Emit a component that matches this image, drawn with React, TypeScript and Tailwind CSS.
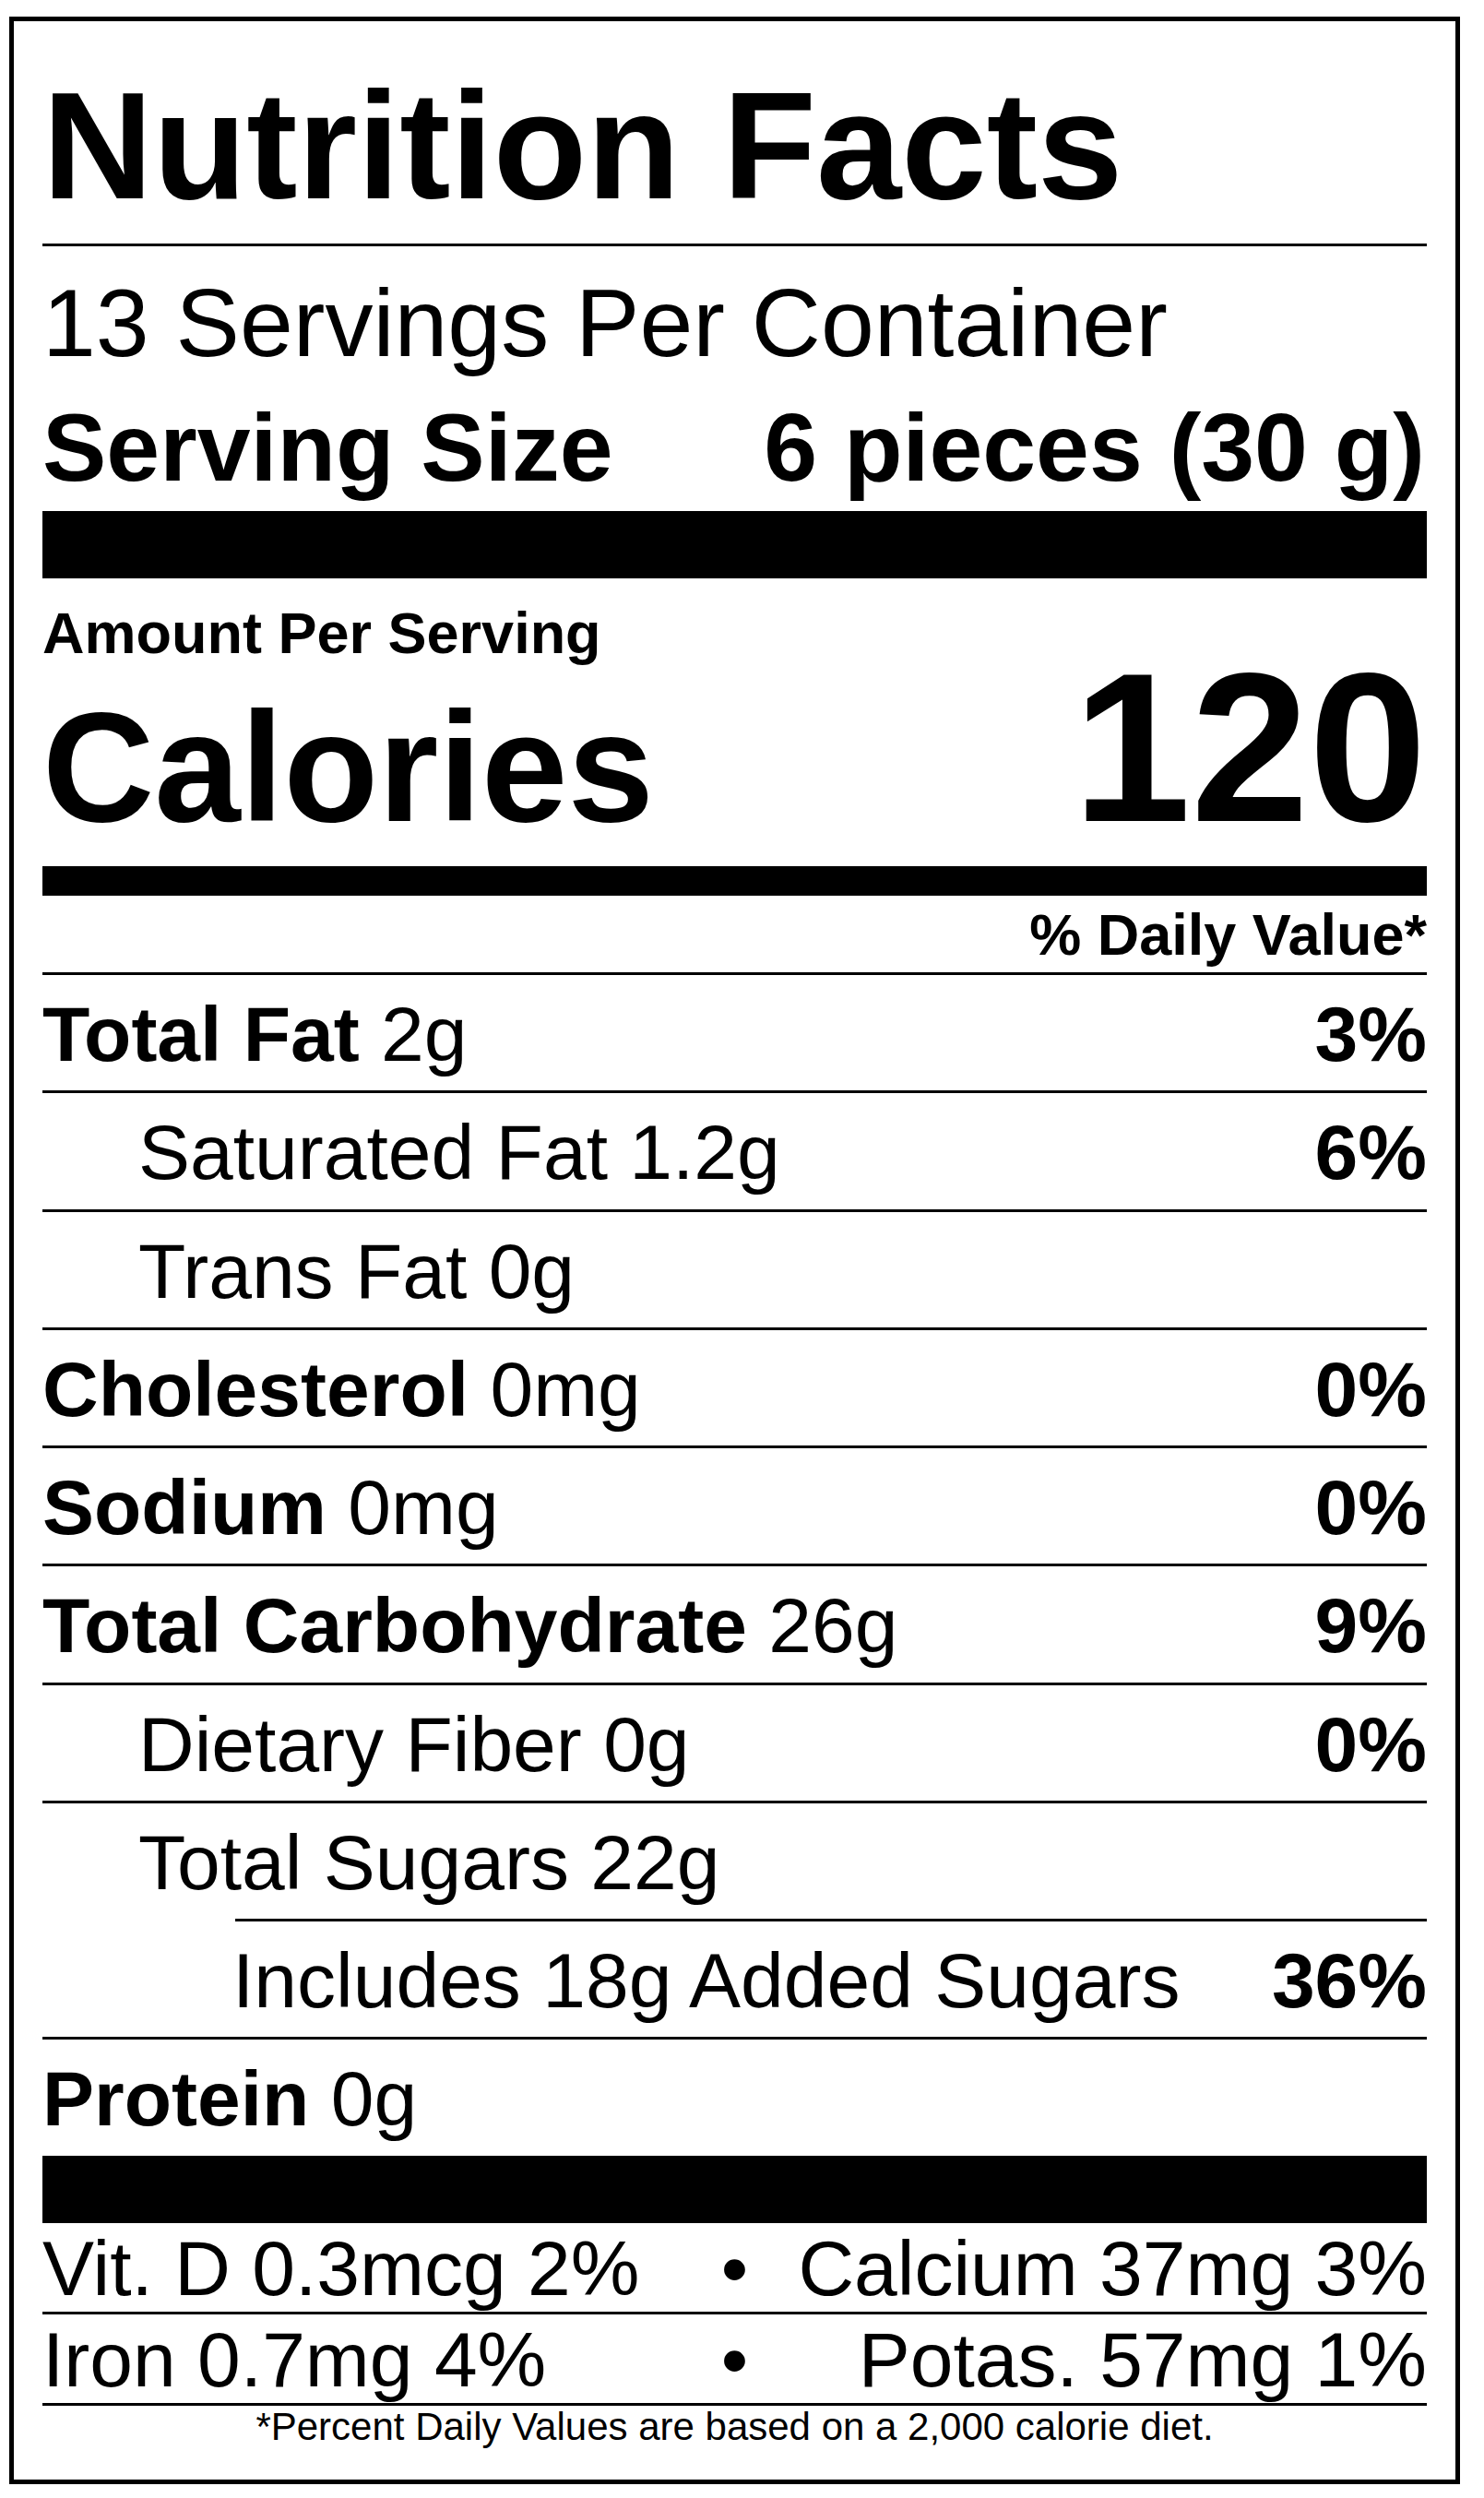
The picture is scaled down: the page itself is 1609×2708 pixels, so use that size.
const font = "font-['Liberation_Sans',Arial,Helvetica,sans-serif]";

type Nutrient = {
  label: string;
  amount?: string;
  dv?: string;
  bold?: boolean;
  level?: 0 | 1 | 2;
  shortRule?: boolean;
};

const nutrients: Nutrient[] = [
  { label: "Total Fat", amount: "2g", dv: "3%", bold: true },
  { label: "Saturated Fat", amount: "1.2g", dv: "6%", level: 1 },
  { label: "Trans Fat", amount: "0g", level: 1 },
  { label: "Cholesterol", amount: "0mg", dv: "0%", bold: true },
  { label: "Sodium", amount: "0mg", dv: "0%", bold: true },
  { label: "Total Carbohydrate", amount: "26g", dv: "9%", bold: true },
  { label: "Dietary Fiber", amount: "0g", dv: "0%", level: 1 },
  { label: "Total Sugars", amount: "22g", level: 1, shortRule: true },
  { label: "Includes 18g Added Sugars", dv: "36%", level: 2 },
];

function NutrientRow({ n }: { n: Nutrient }) {
  const pad = n.level === 2 ? "pl-[206px]" : n.level === 1 ? "pl-[104px]" : "";
  return (
    <>
      <div className={`flex h-[125.25px] items-start justify-between pt-[22px] text-[84px] leading-none ${pad}`}>
        <span>
          {n.bold ? <span className="font-bold">{n.label}</span> : n.label}
          {n.amount ? ` ${n.amount}` : ""}
        </span>
        {n.dv && <span className="font-bold">{n.dv}</span>}
      </div>
      <div className={`h-[3px] bg-black ${n.shortRule ? "ml-[209px]" : ""}`} />
    </>
  );
}

function VitaminRow({ left, right }: { left: string; right: string }) {
  return (
    <div className="grid h-[96px] grid-cols-[1fr_auto_1fr] items-start pt-[7px] text-[84px] leading-none">
      <span>{left}</span>
      <span className="px-[8px]">•</span>
      <span className="text-right">{right}</span>
    </div>
  );
}

export default function App() {
  return (
    <div className={`min-h-[2708px] w-[1609px] bg-white text-black ${font}`}>
      <div className="ml-[10px] pt-[18px]">
        <div className="flex h-[2675px] w-[1573px] flex-col border-[5px] border-black px-[31px] pt-[52px]">
          <h1 className="text-[166px] font-bold leading-none">Nutrition Facts</h1>
          <div className="mt-[23px] h-[3px] bg-black" />

          <p className="mt-[31px] text-[104px] leading-none">13 Servings Per Container</p>
          <div className="mt-[31px] flex items-baseline justify-between text-[104px] font-bold leading-none">
            <span>Serving Size</span>
            <span className="pr-[2px]">6 pieces (30 g)</span>
          </div>
          <div className="mt-[17px] h-[73px] bg-black" />

          <p className="mt-[28px] text-[63px] font-bold leading-none">Amount Per Serving</p>
          <div className="flex items-baseline justify-between font-bold">
            <span className="text-[168px] leading-none">Calories</span>
            <span className="text-[230px] leading-[185px]">120</span>
          </div>
          <div className="mt-[23px] h-[32px] bg-black" />

          <p className="mt-[11px] text-right text-[63px] font-bold leading-none">% Daily Value*</p>
          <div className="mt-[9px] h-[3px] bg-black" />

          {nutrients.map((n) => (
            <NutrientRow key={n.label} n={n} />
          ))}

          <div className="h-[126px] pt-[22px] text-[84px] leading-none">
            <span className="font-bold">Protein</span> 0g
          </div>
          <div className="h-[73px] bg-black" />

          <VitaminRow left="Vit. D 0.3mcg 2%" right="Calcium 37mg 3%" />
          <div className="h-[3px] bg-black" />
          <VitaminRow left="Iron 0.7mg 4%" right="Potas. 57mg 1%" />
          <div className="h-[3px] bg-black" />

          <p className="pt-[2px] text-center text-[42px] leading-none">
            *Percent Daily Values are based on a 2,000 calorie diet.
          </p>
        </div>
      </div>
    </div>
  );
}
